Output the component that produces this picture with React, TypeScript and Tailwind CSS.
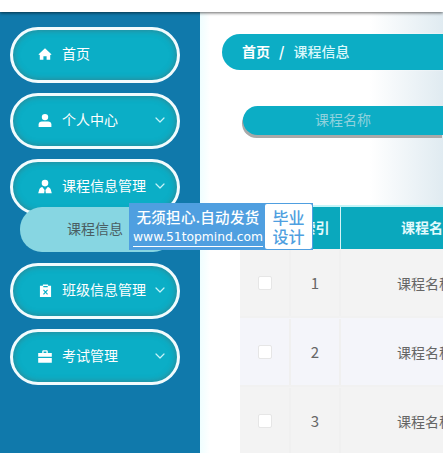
import { ChevronDown } from 'lucide-react';
import type { ReactNode } from 'react';

const font = "font-['Noto_Sans_CJK_SC','Liberation_Sans',sans-serif]";

const HomeIcon = (
  <svg viewBox="0 0 14 14" className="h-[14px] w-[14px]" fill="white">
    <path d="M7 1.2 13.6 7.4 12.2 7.9V12.8H8.6V9.2H5.4V12.8H1.8V7.9L.4 7.4Z" />
  </svg>
);

const PersonIcon = (
  <svg viewBox="0 0 14 14" className="h-[15px] w-[14px]" fill="white">
    <circle cx="7" cy="3.6" r="3.2" />
    <path d="M.6 13.6V11C.6 9.2 2 8 3.8 8H10.2C12 8 13.4 9.2 13.4 11V13.6Z" />
  </svg>
);

const StudentIcon = (
  <svg viewBox="0 0 14 14" className="h-[15px] w-[15px]" fill="white">
    <circle cx="7" cy="3.6" r="3.3" />
    <path d="M4.3 7.4 6.6 10.6 6.2 13.8H.2L1.4 9.6C1.8 8.4 3 7.7 4.3 7.4ZM9.7 7.4 7.4 10.6 7.8 13.8H13.8L12.6 9.6C12.2 8.4 11 7.7 9.7 7.4Z" />
  </svg>
);

const ClipboardIcon = (
  <svg viewBox="0 0 14 15" className="h-[15px] w-[13px]">
    <path fill="white" d="M1 2.4H4.2V1H9.8V2.4H13V14.6H1Z" />
    <path stroke="#0bb0c8" strokeWidth="1.3" fill="none" d="M4.8 6.8 9.2 11.6M9.2 6.8 4.8 11.6M4.6 3.4H9.4" />
  </svg>
);

const BriefcaseIcon = (
  <svg viewBox="0 0 14 13" className="h-[13px] w-[14px]" fill="white">
    <path d="M4.2 3V1.6C4.2.8 4.8.3 5.5.3H8.5C9.2.3 9.8.8 9.8 1.6V3H13.8V6.8H.2V3ZM5.6 1.6V3H8.4V1.6ZM.2 8H13.8V12.8H.2Z" />
  </svg>
);

function MenuPill({ icon, label, arrow = true }: { icon: ReactNode; label: string; arrow?: boolean }) {
  return (
    <div className="flex h-[56px] w-[170px] items-center rounded-[28px] border-[3px] border-[#f2fbfd] bg-[#0baec6] pl-[25px] pr-[9px] text-white shadow-[inset_0_0_6px_rgba(90,90,90,0.55)]">
      <span className="mb-[2px] flex w-[14px] justify-center">{icon}</span>
      <span className="mb-[4px] ml-[10px] flex-1 text-[14px] leading-none">{label}</span>
      {arrow && <ChevronDown className="mb-[2px] h-[16px] w-[16px] text-[#c6f3f8]" strokeWidth={1.8} />}
    </div>
  );
}

function Row({ n, bg }: { n: number; bg: string }) {
  return (
    <div className={`flex h-[69px] border-b-2 border-[#f1f1f1] pt-[1px] text-[14px] text-[#666666] ${bg}`}>
      <div className="flex w-[51px] items-center justify-center border-r-2 border-[#f0f0f0]">
        <span className="h-[14px] w-[14px] rounded-[2px] border border-[#e6e6e6] bg-white" />
      </div>
      <div className="flex w-[50px] items-center justify-center border-r-2 border-[#f0f0f0] text-[15px]">{n}</div>
      <div className="flex w-[102px] items-center overflow-hidden whitespace-nowrap pl-[56px]">课程名称1</div>
    </div>
  );
}

export default function App() {
  return (
    <div className={`relative h-[453px] w-[443px] overflow-hidden bg-white ${font}`}>
      <div className="relative z-10 h-[12px] bg-white shadow-[0_1px_3px_rgba(0,0,0,0.6)]" />
      <div className="flex h-[441px]">
        <aside className="flex w-[200px] shrink-0 flex-col gap-[10px] bg-[#1079ab] pl-[10px] pt-[15px]">
          <MenuPill icon={HomeIcon} label="首页" arrow={false} />
          <MenuPill icon={PersonIcon} label="个人中心" />
          <div className="relative">
            <MenuPill icon={StudentIcon} label="课程信息管理" />
            <div className="absolute left-[10px] top-[48px] flex h-[45px] w-[155px] items-center rounded-[22px] bg-[#87d6e2] pb-[2px] pl-[47px] text-[14px] text-[#4a5e63]">
              课程信息
            </div>
          </div>
          <div className="h-[28px]" />
          <MenuPill icon={ClipboardIcon} label="班级信息管理" />
          <MenuPill icon={BriefcaseIcon} label="考试管理" />
        </aside>
        <main className="flex-1 overflow-hidden bg-[linear-gradient(90deg,#effeff_0,#ffffff_10px,#ffffff_170px,#e0ebf1_243px)]">
          <div className="ml-[22px] mt-[22px] flex h-[36px] w-[240px] items-center rounded-l-[18px] bg-[#0cadc5] pb-[2px] pl-[20px] text-[14px] font-bold text-white shadow-[0_0_2px_rgba(255,255,255,0.9)]">
            <span>首页</span>
            <span className="mx-[9px]">/</span>
            <span className="font-medium text-[#d9f8fb]">课程信息</span>
          </div>
          <div className="ml-[43px] mt-[36px] flex h-[29px] w-[200px] items-center rounded-l-[15px] bg-[#0cadc5] pb-[2px] pl-[72px] text-[14px] text-[#8fd2dd] shadow-[-1px_3px_0_#a9a9a9]">
            课程名称
          </div>
          <div className="ml-[40px] mt-[70px] w-[203px]">
            <div className="flex h-[44px] border-t-2 border-[#c6f5f8] bg-[#0aa8bd] text-[14px] font-bold text-[#e2fafc]">
              <div className="w-[51px]" />
              <div className="flex w-[50px] items-center justify-center border-r border-[#d5f4f7] pb-[2px]">索引</div>
              <div className="flex w-[102px] items-center overflow-hidden whitespace-nowrap pb-[2px] pl-[60px]">课程名称</div>
            </div>
            <Row n={1} bg="bg-[#f3f3f3]" />
            <Row n={2} bg="bg-[#f4f5fa]" />
            <Row n={3} bg="bg-[#f3f3f3]" />
          </div>
        </main>
      </div>
      <div className="absolute left-[129px] top-[203px] z-20 flex h-[47px] w-[184px] items-center bg-[#4f9fe0] pl-[4px] text-white">
        <div className="flex w-[130px] flex-col items-center">
          <span className="text-[14.5px] font-medium leading-[22px] tracking-[0.3px]">无须担心.自动发货</span>
          <span className="border-b border-white font-['DejaVu_Sans',sans-serif] text-[12.3px] leading-[18px]">www.51topmind.com</span>
        </div>
        <div className="ml-[2px] flex h-[45px] w-[47px] flex-col items-center justify-center rounded-[2px] bg-white text-[16px] font-medium leading-[19px] text-[#4f9fe0]">
          <span>毕业</span>
          <span>设计</span>
        </div>
      </div>
    </div>
  );
}
